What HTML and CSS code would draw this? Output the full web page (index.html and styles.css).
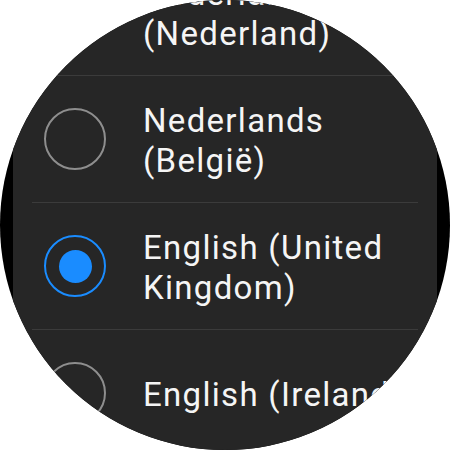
FILE: index.html
```html
<!DOCTYPE html>
<html>
<head>
<meta charset="utf-8">
<link rel="stylesheet" href="styles.css">
</head>
<body>
<div class="watch">
  <div class="screen">
    <ul class="list">
      <li class="row"><span class="radio"></span><span class="label">Nederlands (Nederland)</span></li>
      <li class="row"><span class="radio"></span><span class="label">Nederlands (België)</span></li>
      <li class="row"><span class="radio radio-on"></span><span class="label">English (United Kingdom)</span></li>
      <li class="row row-last"><span class="radio"></span><span class="label">English (Ireland)</span></li>
    </ul>
  </div>
</div>
</body>
</html>
```

FILE: styles.css
```css
html, body {
  margin: 0;
  padding: 0;
  background: #ffffff;
}
.watch {
  width: 450px;
  height: 450px;
  border-radius: 50%;
  background: #000000;
  overflow: hidden;
  display: flex;
  justify-content: center;
}
.screen {
  width: 424px;
  height: 450px;
  background: #262626;
  overflow: hidden;
}
.list {
  list-style: none;
  margin: -51px 0 0 0;
  padding: 0;
}
.row {
  height: 126px;
  display: flex;
  align-items: center;
  padding: 0 0 0 12px;
  margin: 0 19px;
  border-bottom: 1px solid #3b3b3b;
}
.row-last {
  padding-bottom: 8px;
  border-bottom: none;
}
.radio {
  flex: none;
  width: 58px;
  height: 58px;
  border: 2px solid #8e8e8e;
  border-radius: 50%;
  display: flex;
  align-items: center;
  justify-content: center;
}
.radio-on {
  border-color: #1a8cff;
}
.radio-on::before {
  content: "";
  width: 33px;
  height: 33px;
  border-radius: 50%;
  background: #1a8cff;
}
.label {
  flex: 1;
  margin-left: 37px;
  padding-top: 3px;
  font-family: Roboto, "Noto Sans", sans-serif;
  font-size: 33px;
  line-height: 40px;
  color: #f5f5f5;
  letter-spacing: 1.3px;
}
.row-last .label {
  white-space: nowrap;
}
```
